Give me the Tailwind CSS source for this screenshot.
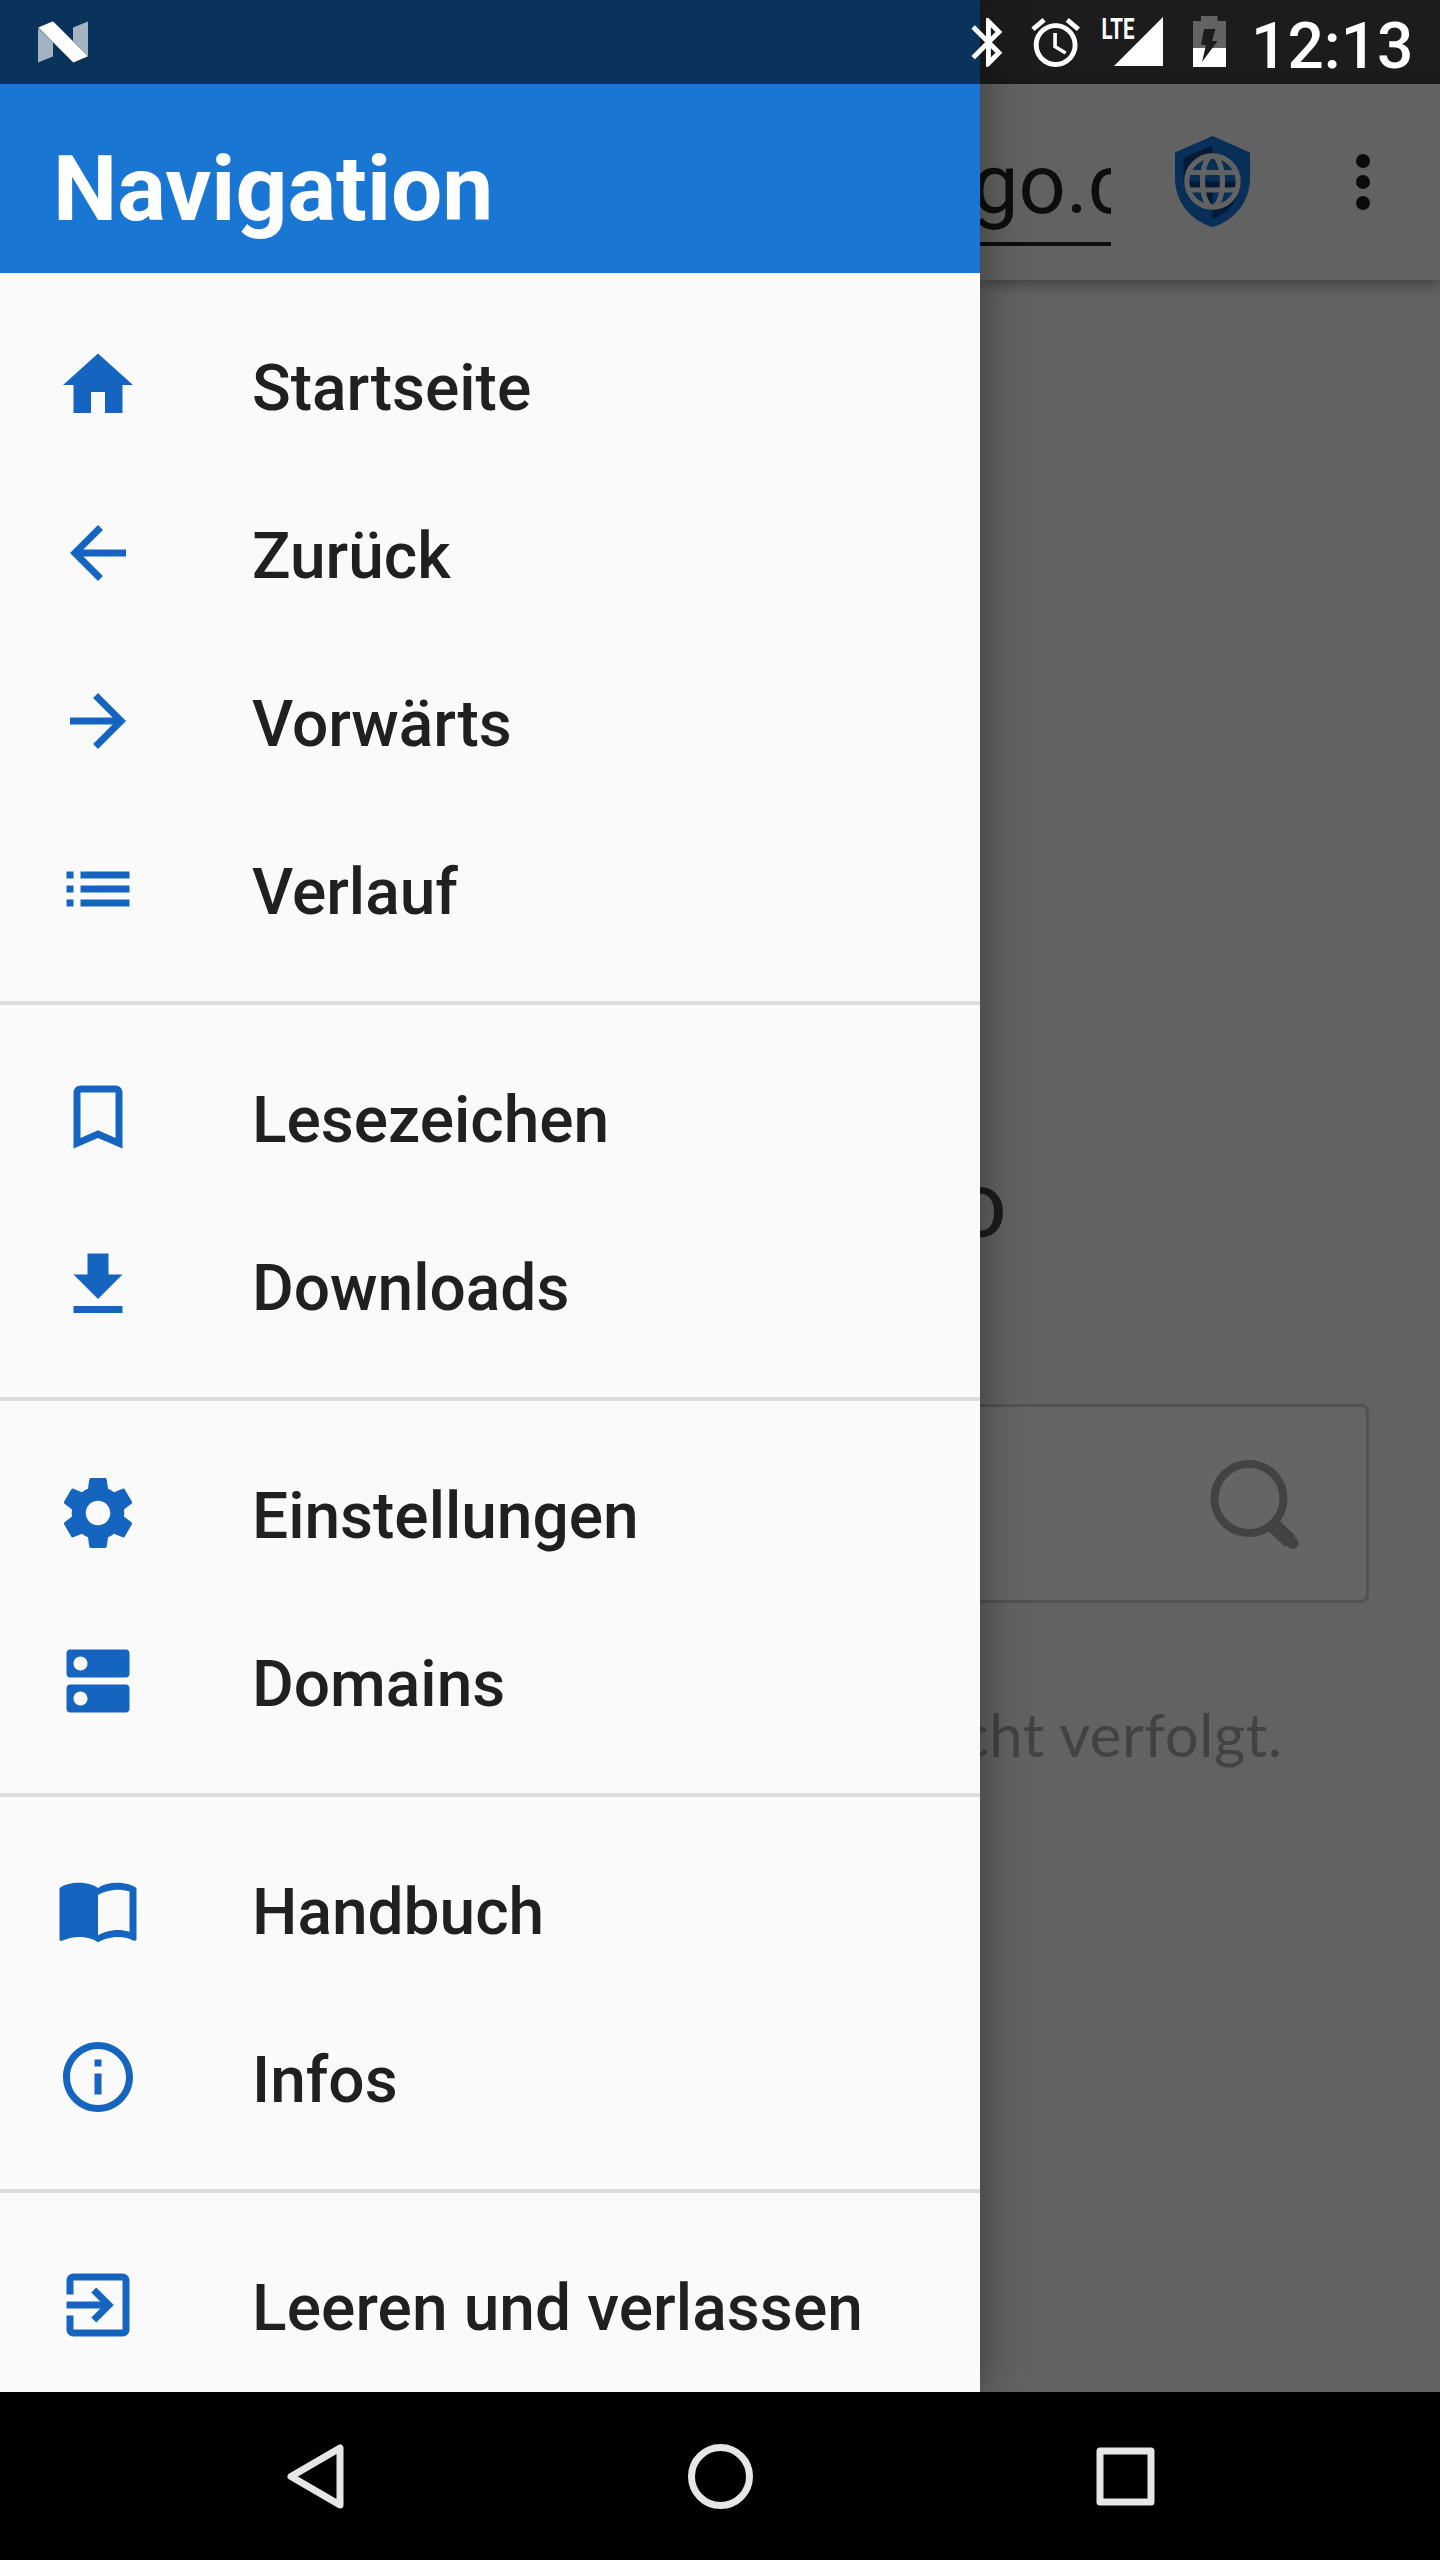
<!DOCTYPE html>
<html lang="de">
<head>
<meta charset="utf-8">
<title>Navigation</title>
<script src="https://cdn.jsdelivr.net/npm/@tailwindcss/browser@4"></script>
</head>
<body class="w-[1440px] h-[2560px] overflow-hidden bg-black font-['Roboto',sans-serif]">
<div class="relative flex flex-col w-[1440px] h-[2560px]">
  <div class="flex h-[2392px]">
    <!-- Drawer -->
    <aside class="relative z-10 w-[980px] shrink-0 flex flex-col bg-[#fafafa] shadow-[0_0_42px_rgba(0,0,0,0.42)]">
      <div class="h-[84px] shrink-0 bg-[#09335a]">
        <svg class="block" width="120" height="84" viewBox="0 0 120 84">
          <path d="M38 28V62.5L53 56.5V42.500zM73 27.500L88 21.500V56L73 41z" fill="#a4b3c1"/>
          <path d="M38.300 27.500L53 21.300L88 56.300L73.300 62.600z" fill="#fff"/>
        </svg>
      </div>
      <header class="h-[189px] shrink-0 bg-[#1976d3] pl-[53px] pt-[55px]">
        <h1 class="text-[91px] leading-[100px] font-bold text-white">Navigation</h1>
      </header>
      <nav class="flex flex-col text-[#202020] text-[64px] font-medium leading-[84px]">
        <ul class="py-7">
          <li class="h-[168px] flex items-center pl-14 gap-28"><svg class="size-[84px] fill-[#1565c0]" viewBox="0 0 24 24"><path d="M10 20v-6h4v6h5v-8h3L12 3 2 12h3v8z"/></svg><span class="pt-[7px]">Startseite</span></li>
          <li class="h-[168px] flex items-center pl-14 gap-28"><svg class="size-[84px] fill-[#1565c0]" viewBox="0 0 24 24"><path d="M20 11H7.830l5.590-5.590L12 4l-8 8 8 8 1.410-1.410L7.830 13H20v-2z"/></svg><span class="pt-[7px]">Zurück</span></li>
          <li class="h-[168px] flex items-center pl-14 gap-28"><svg class="size-[84px] fill-[#1565c0]" viewBox="0 0 24 24"><path d="M12 4l-1.410 1.410L16.170 11H4v2h12.170l-5.580 5.590L12 20l8-8z"/></svg><span class="pt-[7px]">Vorwärts</span></li>
          <li class="h-[168px] flex items-center pl-14 gap-28"><svg class="size-[84px] fill-[#1565c0]" viewBox="0 0 24 24"><path d="M3 13h2v-2H3v2zm0 4h2v-2H3v2zm0-8h2V7H3v2zm4 4h14v-2H7v2zm0 4h14v-2H7v2zM7 7v2h14V7H7z"/></svg><span class="pt-[7px]">Verlauf</span></li>
        </ul>
        <ul class="py-7 border-t-4 border-[#dcdcdc]">
          <li class="h-[168px] flex items-center pl-14 gap-28"><svg class="size-[84px] fill-[#1565c0]" viewBox="0 0 24 24"><path d="M17 3H7c-1.100 0-1.990.9-1.990 2L5 21l7-3 7 3V5c0-1.100-.9-2-2-2zm0 15l-5-2.180L7 18V5h10v13z"/></svg><span class="pt-[7px]">Lesezeichen</span></li>
          <li class="h-[168px] flex items-center pl-14 gap-28"><svg class="size-[84px] fill-[#1565c0]" viewBox="0 0 24 24"><path d="M19 9h-4V3H9v6H5l7 7 7-7zM5 18v2h14v-2H5z"/></svg><span class="pt-[7px]">Downloads</span></li>
        </ul>
        <ul class="py-7 border-t-4 border-[#dcdcdc]">
          <li class="h-[168px] flex items-center pl-14 gap-28"><svg class="size-[84px] fill-[#1565c0]" viewBox="0 0 24 24"><path d="M19.430 12.980c.04-.32.070-.64.070-.98s-.03-.66-.07-.98l2.110-1.650c.19-.15.24-.42.12-.64l-2-3.460c-.12-.22-.39-.3-.61-.22l-2.490 1c-.52-.4-1.080-.73-1.690-.98l-.38-2.650C14.460 2.180 14.250 2 14 2h-4c-.25 0-.46.18-.49.420l-.38 2.650c-.61.25-1.170.59-1.690.98l-2.490-1c-.23-.09-.49 0-.61.220l-2 3.460c-.13.22-.07.49.12.640l2.110 1.650c-.04.32-.07.65-.07.980s.03.66.070.980l-2.110 1.650c-.19.15-.24.42-.12.640l2 3.460c.12.220.39.3.610.220l2.490-1c.52.4 1.080.730 1.690.980l.38 2.650c.03.240.24.420.490.420h4c.25 0 .460-.18.490-.42l.38-2.650c.610-.25 1.170-.59 1.690-.98l2.490 1c.230.090.490 0 .610-.22l2-3.460c.120-.22.070-.49-.12-.64l-2.110-1.650zM12 15.500c-1.930 0-3.500-1.570-3.500-3.500s1.570-3.500 3.500-3.500 3.500 1.570 3.500 3.500-1.570 3.500-3.500 3.500z"/></svg><span class="pt-[7px]">Einstellungen</span></li>
          <li class="h-[168px] flex items-center pl-14 gap-28"><svg class="size-[84px] fill-[#1565c0]" viewBox="0 0 24 24"><path d="M20 13H4c-.55 0-1 .45-1 1v6c0 .55.45 1 1 1h16c.55 0 1-.45 1-1v-6c0-.55-.45-1-1-1zM7 19c-1.100 0-2-.9-2-2s.9-2 2-2 2 .9 2 2-.9 2-2 2zM20 3H4c-.55 0-1 .45-1 1v6c0 .55.45 1 1 1h16c.55 0 1-.45 1-1V4c0-.55-.45-1-1-1zM7 9c-1.100 0-2-.9-2-2s.9-2 2-2 2 .9 2 2-.9 2-2 2z"/></svg><span class="pt-[7px]">Domains</span></li>
        </ul>
        <ul class="py-7 border-t-4 border-[#dcdcdc]">
          <li class="h-[168px] flex items-center pl-14 gap-28"><svg class="size-[84px] fill-[#1565c0]" viewBox="0 0 24 24"><path d="M21 5c-1.110-.35-2.330-.5-3.500-.5-1.950 0-4.050.4-5.500 1.500-1.450-1.100-3.550-1.500-5.500-1.500S2.450 4.900 1 6v14.650c0 .25.25.5.5.5.1 0 .15-.05.25-.05C3.100 20.450 5.050 20 6.500 20c1.950 0 4.050.4 5.500 1.500 1.350-.85 3.800-1.500 5.500-1.500 1.650 0 3.350.3 4.750 1.050.1.050.15.050.25.050.25 0 .5-.25.5-.5V6c-.6-.45-1.250-.75-2-1zm0 13.500c-1.100-.35-2.300-.5-3.500-.5-1.700 0-4.150.65-5.500 1.500V8c1.350-.85 3.800-1.500 5.500-1.500 1.200 0 2.400.15 3.500.5v11.500z"/></svg><span class="pt-[7px]">Handbuch</span></li>
          <li class="h-[168px] flex items-center pl-14 gap-28"><svg class="size-[84px] fill-[#1565c0]" viewBox="0 0 24 24"><path d="M11 17h2v-6h-2v6zm1-15C6.480 2 2 6.480 2 12s4.480 10 10 10 10-4.480 10-10S17.520 2 12 2zm0 18c-4.410 0-8-3.590-8-8s3.590-8 8-8 8 3.590 8 8-3.590 8-8 8zM11 9h2V7h-2v2z"/></svg><span class="pt-[7px]">Infos</span></li>
        </ul>
        <ul class="pt-7 border-t-4 border-[#dcdcdc]">
          <li class="h-[168px] flex items-center pl-14 gap-28"><svg class="size-[84px] fill-[#1565c0]" viewBox="0 0 24 24"><path d="M10.090 15.590L11.500 17l5-5-5-5-1.410 1.410L12.670 11H3v2h9.670l-2.580 2.590zM19 3H5c-1.110 0-2 .9-2 2v4h2V5h14v14H5v-4H3v4c0 1.100.890 2 2 2h14c1.100 0 2-.9 2-2V5c0-1.100-.9-2-2-2z"/></svg><span class="pt-[7px] tracking-[0.1px]">Leeren und verlassen</span></li>
        </ul>
      </nav>
    </aside>
    <!-- Dimmed browser page -->
    <main class="w-[460px] flex flex-col bg-[#626262] overflow-hidden">
      <div class="h-[84px] shrink-0 bg-[#1c1c1c]"></div>
      <div class="h-[196px] shrink-0 flex bg-[#626262] shadow-[0_3px_14px_rgba(0,0,0,0.4)]">
        <div class="w-[131px] h-[162px] border-b-4 border-[#0d0d0d] overflow-hidden">
          <div class="-ml-[8px] pt-[52px] text-[83px] leading-[98px] text-[#0d0d0d] whitespace-nowrap">go.c</div>
        </div>
        <svg class="ml-[64px] mt-[52px]" width="75" height="91" viewBox="0 0 75 91">
          <path d="M37.500 0L75 16.500V42C75 66 59 85 37.500 91C16 85 0 66 0 42V16.500z" fill="#072f57"/>
          <path d="M37.500 9.500L8.500 22V42C8.500 52 12 60 18 66L37.500 45zM37.500 45L66 42C66 62 54 77 37.500 82.500z" fill="#041a34"/>
          <circle cx="37.500" cy="45.500" r="26" fill="#072f57"/>
          <path d="M13 45.500H37.500V70A26 26 0 0 1 30 68V51H13zM37.500 20V45.500H62V51H37.500V45.500z" fill="#041a34"/>
          <g fill="none" stroke="#626262" stroke-width="5.200">
            <circle cx="37.500" cy="45.500" r="25.700"/><ellipse cx="37.500" cy="45.500" rx="10" ry="25.500"/><path d="M14 36.500H61M14 54H61"/>
          </g>
        </svg>
        <svg class="ml-[101px] mt-[70px]" width="24" height="56" viewBox="0 0 24 56" fill="#0b0b0b"><circle cx="12" cy="7" r="7"/><circle cx="12" cy="28" r="7"/><circle cx="12" cy="49" r="7"/></svg>
      </div>
      <div class="h-[860px] shrink-0"></div>
      <div class="h-[264px] shrink-0 overflow-hidden"><div class="-ml-[28px] font-['Lato'] text-[97px] leading-[120px] text-[#1c1c1c]">o</div></div>
      <div class="w-[389px] h-[199px] shrink-0 border-[3px] border-l-0 border-[#525252] rounded-r-lg bg-[#656565] flex">
        <svg class="ml-[228px] mt-[50px]" width="100" height="100" viewBox="0 0 100 100">
          <path d="M64 67L82 84" stroke="#434343" stroke-width="15"/><path d="M70 72L84.500 86" stroke="#434343" stroke-width="12" stroke-linecap="round"/>
          <circle cx="41" cy="41.500" r="34.500" fill="none" stroke="#434343" stroke-width="8"/>
        </svg>
      </div>
      <div class="-ml-[20px] pt-[89px] font-['Lato'] text-[60px] leading-[84px] tracking-[0.5px] text-[#424242] whitespace-nowrap">cht verfolgt.</div>
    </main>
  </div>
  <!-- System navigation bar -->
  <div class="h-[168px] bg-black">
    <svg class="block" width="1440" height="168" viewBox="0 0 1440 168" fill="none" stroke="#e6e6e6" stroke-width="7" stroke-linejoin="round">
      <path d="M291 84.500L340 56V113z"/><circle cx="720.500" cy="84.500" r="29"/><rect x="1100" y="59" width="51" height="51"/>
    </svg>
  </div>
  <!-- Status icons float above the drawer and the page -->
  <div class="absolute z-20 top-0 right-0 h-[84px] flex pr-[28px]">
    <svg width="290" height="84" viewBox="950 0 290 84" fill="#fff">
      <path transform="translate(959.300 13.200) scale(2.430)" d="M17.710 7.710L12 2h-1v7.590L6.410 5 5 6.410 10.590 12 5 17.590 6.410 19 11 14.410V22h1l5.710-5.710-4.300-4.290 4.300-4.290zM13 5.830l1.880 1.880L13 9.590V5.830zm1.880 10.460L13 18.170v-3.760l1.880 1.880z"/>
      <path transform="translate(1026.500 13.500) scale(2.430)" d="M22 5.720l-4.600-3.860-1.290 1.530 4.600 3.860L22 5.720zM7.880 3.390L6.600 1.860 2 5.710l1.290 1.530 4.590-3.850zM12.500 8H11v6l4.750 2.850.750-1.230-4-2.370V8zM12 4c-4.970 0-9 4.030-9 9s4.020 9 9 9c4.970 0 9-4.030 9-9s-4.030-9-9-9zm0 16c-3.870 0-7-3.130-7-7s3.130-7 7-7 7 3.130 7 7-3.130 7-7 7z"/>
      <text x="1101.500" y="39" font-family="Roboto" font-weight="700" font-size="29.500" textLength="33" lengthAdjust="spacingAndGlyphs">LTE</text>
      <path d="M1114 66H1163V17z"/>
      <path d="M1193 48V21H1201V16H1217.500V21H1226V48z" fill="#636363"/>
      <path d="M1193 48H1226V67H1193z"/>
      <path d="M1204 29H1215.500L1212 41H1217.500L1202 62L1206 45H1201z" fill="#1c1c1c"/>
    </svg>
    <div class="w-[172px] pl-[11px] pt-[9px] text-[64px] leading-[76px] font-medium text-white">12:13</div>
  </div>
</div>
</body>
</html>
